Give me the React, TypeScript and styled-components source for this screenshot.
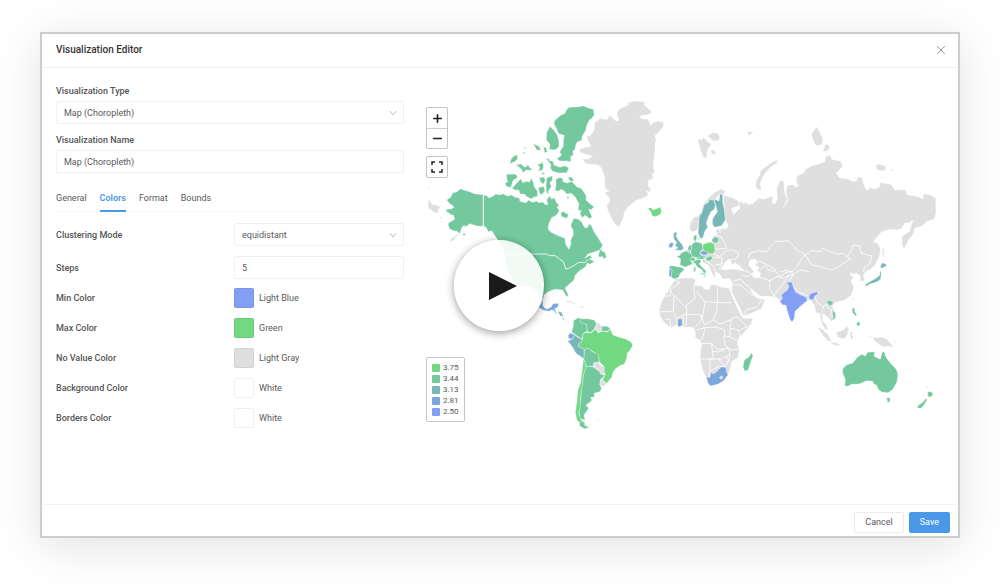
import React from "react";
import styled, { createGlobalStyle } from "styled-components";
import { Minus, Plus, X } from "lucide-react";

const GlobalStyle = createGlobalStyle`
  *, *::before, *::after { box-sizing: border-box; }
  body {
    margin: 0;
    background: #fff;
    color: #595959;
    font-family: Roboto, "Liberation Sans", sans-serif;
    font-size: 9px;
    line-height: 12px;
  }
  button, input, select { font: inherit; color: inherit; }
`;

const Stage = styled.div`
  position: relative;
  min-height: 100vh;
  padding: 32px 40px 48px;
  overflow: hidden;
`;

const Dialog = styled.section`
  display: flex;
  flex-direction: column;
  min-height: calc(100vh - 80px);
  border: 2px solid #cdcdcd;
  background: #fff;
  box-shadow: 0 8px 44px rgba(0, 0, 0, 0.12);
`;

const Header = styled.header`
  display: flex;
  align-items: center;
  justify-content: space-between;
  height: 34px;
  padding: 0 12px 2px 14px;
  border-bottom: 1px solid #f2f2f2;
`;

const Title = styled.h1`
  margin: 0;
  color: #333;
  font-size: 10px;
  font-weight: 500;
  line-height: 14px;
`;

const CloseButton = styled.button`
  display: flex;
  width: 10px;
  justify-content: center;
  padding: 0;
  border: 0;
  background: none;
  color: #8c8c8c;
  svg { flex: none; }
`;

const Body = styled.div`
  display: grid;
  grid-template-columns: minmax(0, 58fr) minmax(0, 85fr);
  gap: 22px;
  flex: 1;
  align-items: start;
  padding: 17px 22px 16px 14px;
`;

const Settings = styled.form`
  display: flex;
  flex-direction: column;
`;

const Field = styled.div`
  display: flex;
  flex-direction: column;
  gap: 4px;
  margin-bottom: 10px;
`;

const Label = styled.label`
  color: #555;
  font-weight: 500;
`;

const inputLook = `
  width: 100%;
  height: 23px;
  padding: 0 7px;
  border: 1px solid #f0f0f0;
  border-radius: 2px;
  background: #fff;
`;

const TextInput = styled.input`${inputLook}`;

const SelectBox = styled.div`
  position: relative;
  svg {
    position: absolute;
    top: 9px;
    right: 7px;
    pointer-events: none;
  }
`;

const Select = styled.select`
  ${inputLook}
  appearance: none;
`;

const Tabs = styled.div`
  display: flex;
  gap: 13px;
  margin: 8px 0 11px;
  border-bottom: 1px solid #f7f7f7;
`;

const Tab = styled.button<{ $active?: boolean }>`
  height: 21px;
  margin-bottom: -1px;
  padding: 0 0 6px;
  border: 0;
  border-bottom: 2px solid ${(p) => (p.$active ? "#4a98e8" : "transparent")};
  background: none;
  color: ${(p) => (p.$active ? "#4a98e8" : "#595959")};
  font-weight: ${(p) => (p.$active ? 600 : 400)};
`;

const Rows = styled.div`
  display: flex;
  flex-direction: column;
  gap: 10px;
  & + & { margin-top: 9px; }
`;

const Row = styled.div`
  display: grid;
  grid-template-columns: 178px minmax(0, 1fr);
  align-items: center;
`;

const ColorPick = styled.div`
  display: flex;
  align-items: center;
  gap: 5px;
`;

const Swatch = styled.button<{ $color: string }>`
  width: 20px;
  height: 20px;
  padding: 0;
  border: 1px solid rgba(0, 0, 0, 0.06);
  border-radius: 2px;
  background: ${(p) => p.$color};
`;

const MapPane = styled.div`
  position: relative;
  margin-top: 11px;
`;

const MapDrawing = styled.svg`
  display: block;
  width: 100%;
  height: auto;
`;

const Controls = styled.div`
  position: absolute;
  top: 11px;
  left: 0;
  display: flex;
  flex-direction: column;
  gap: 7px;
`;

const ControlBar = styled.div`
  display: flex;
  flex-direction: column;
  width: 22px;
  border: 1px solid #c4c4c4;
  border-radius: 2px;
  background: #fff;
`;

const ControlButton = styled.button`
  display: flex;
  align-items: center;
  justify-content: center;
  height: 20px;
  padding: 0;
  border: 0;
  background: none;
  color: #222;
  & + & { border-top: 1px solid #d0d0d0; }
`;

const Legend = styled.ul`
  position: absolute;
  bottom: 14px;
  left: 0;
  margin: 0;
  padding: 4px 5px;
  border: 1px solid #c4c4c4;
  border-radius: 2px;
  background: #fff;
  list-style: none;
`;

const LegendItem = styled.li<{ $color: string }>`
  display: flex;
  align-items: center;
  gap: 3px;
  height: 11px;
  font-size: 8px;
  &::before {
    content: "";
    width: 8px;
    height: 8px;
    border-radius: 1px;
    background: ${(p) => p.$color};
  }
`;

const Footer = styled.footer`
  display: flex;
  align-items: center;
  justify-content: flex-end;
  gap: 5px;
  height: 32px;
  padding: 3px 8px 0;
  border-top: 1px solid #f2f2f2;
`;

const ActionButton = styled.button<{ $primary?: boolean }>`
  height: 21px;
  padding: 0 10px;
  border: 1px solid ${(p) => (p.$primary ? "#4a98e8" : "#ebebeb")};
  border-radius: 2px;
  background: ${(p) => (p.$primary ? "#4a98e8" : "#fff")};
  color: ${(p) => (p.$primary ? "#fff" : "#595959")};
`;

const PlayButton = styled.button`
  position: absolute;
  top: calc(50% - 53px);
  left: calc(50% - 46px);
  display: flex;
  align-items: center;
  justify-content: center;
  width: 90px;
  height: 91px;
  padding: 0;
  border: 0;
  border-radius: 50%;
  background: rgba(255, 255, 255, 0.9);
  box-shadow: 0 2px 8px rgba(0, 0, 0, 0.4);
`;

const LOW = "#829ff5";
const MIDLOW = "#7ba7dc";
const MID = "#78b6b8";
const HIGH = "#73c99d";
const TOP = "#73d882";
const NONE = "#dfdfdf";

type Shape = [fill: string, d: string];
type Region = { x: number; y: number; shapes: Shape[]; borders?: string };

// Each region is drawn at three units per map unit from its own corner.
const regions: Region[] = [
  {
    x: 420,
    y: 90,
    shapes: [
      [HIGH, "M190 314L200 317 207 324 222 317 227 312 240 315 248 311 262 318 275 315 285 322 298 324 300 334 318 338 326 330 336 337 350 333 356 338 368 336 374 343 384 344 380 330 388 318 396 328 402 322 410 338 417 346 411 352 418 362 410 375 395 383 387 400 384 416 392 426 415 437 435 445 437 463 447 478 453 462 452 450 460 435 459 419 452 408 456 396 462 385 475 388 485 395 493 412 501 414 508 401 516 410 522 425 532 440 540 452 548 465 540 480 520 487 504 492 494 505 510 496 516 502 508 508 524 514 512 522 501 520 497 530 475 545 465 557 462 570 445 585 435 595 443 610 445 620 438 618 428 600 405 598 385 605 372 615 370 628 355 610 335 592 295 588 270 560 258 530 255 492 245 470 230 445 215 422 205 425 198 412 190 408Z"],
      [HIGH, "M122 296L130 300 150 305 162 311 190 314 190 408 175 409 158 404 148 401 142 407 133 412 134 405 126 412 120 428 95 453 91 452 117 430 112 424 100 422 88 416 84 402 91 395 104 388 100 375 92 374 88 369 80 366 79 358 94 357 102 352 98 347 88 340 80 330 92 322 99 308 110 306Z"],
      [HIGH, "M535 497L538 486 544 475 546 484 554 486 560 501 550 507 548 499 539 502Z"],
      [HIGH, "M480 50L488 47 505 54 520 58 523 75 515 85 508 90 501 105 496 124 487 137 485 151 472 156 468 162 465 178 459 183 460 195 452 200 453 215 440 213 420 213 411 206 425 195 419 186 430 168 430 150 433 136 416 131 410 116 402 102 403 93 420 77 435 70 439 60 447 52Z"],
      [HIGH, "M390 109L399 118 405 125 412 136 417 154 417 170 405 180 388 178 390 162 379 150 380 128 385 118Z"],
      [HIGH, "M378 205L388 207 389 213 398 213 402 225 420 232 430 228 440 229 446 236 440 248 416 249 398 244 391 234 393 224Z"],
      [HIGH, "M269 221L274 206 283 197 293 195 292 208 284 215ZM340 161L357 169 363 181 350 180ZM370 172L378 172 382 186 374 188ZM307 187L316 187 315 192ZM313 171L318 171 317 176 313 175ZM288 224L305 222 311 231 318 231 324 224 330 234 337 237 332 241 318 240 308 249 306 239ZM352 224L364 220 366 213 371 228 368 240 355 244 360 232Z"],
      [HIGH, "M260 253L282 252 291 256 292 264 280 270 272 293 258 288 255 280 263 276 260 263Z"],
      [HIGH, "M283 287L295 274 303 266 308 278 320 274 329 276 334 264 340 277 343 291 353 304 352 320 341 321 335 327 323 322 314 313 300 312 297 301 285 300 276 295Z"],
      [HIGH, "M358 263L372 261 376 271 370 283 361 275ZM355 293L371 289 375 303 365 314 358 309ZM380 264L397 257 397 272 390 277 394 290 385 304 386 315 379 306 378 287ZM359 248L374 248 372 254Z"],
      [HIGH, "M408 268L420 262 428 266 430 276 443 279 455 274 470 290 485 296 499 318 498 330 508 340 522 350 514 359 506 358 516 380 510 387 495 376 487 383 480 371 484 362 474 360 477 342 467 323 455 310 440 312 433 303 424 298 414 304 405 301 408 285ZM443 262L456 262 462 272 451 274ZM422 370L430 364 437 370 445 372 442 385 425 380ZM440 318L447 322 444 329Z"],
      [NONE, "M24 328L40 345 47 344 62 351 54 358 55 368 44 369 34 359 25 355ZM24 292L31 296 25 299Z"],
      [HIGH, "M61 381L67 384 62 385ZM127 431L138 430 132 438Z"],
      [MIDLOW, "M370 628L368 645 376 656 385 656 394 650 399 641 416 640 414 652 405 655 402 662 395 659 388 664 370 661 356 652 362 642Z"],
      [MID, "M400 662L406 656 407 667 416 672 409 671ZM413 664L425 667 430 680 421 678ZM425 680L433 688 430 691Z"],
      [NONE, "M437 693L448 697 446 699 437 696ZM438 634L452 633 469 643 462 643 452 637 438 637ZM478 649L492 649 490 653 480 653Z"],
    ],
    borders: "M190 314V408M255 492H380L388 497H405L430 515 438 538 460 528 475 518 495 517 505 508M290 588L330 590 355 612",
  },
  {
    x: 440,
    y: 230,
    shapes: [
      [HIGH, "M400 272L415 263 420 264 422 276 440 283 442 304 430 310 426 327 411 318 395 306 400 288Z"],
      [HIGH, "M418 264L428 267 442 266 462 270 470 281 463 297 451 308 442 304 440 283 422 278Z"],
      [NONE, "M469 277L479 281 486 292 484 305 472 306 467 295Z"],
      [HIGH, "M485 289L501 289 511 295 502 304 485 303Z"],
      [TOP, "M430 310L441 308 454 309 466 297 474 308 488 304 503 306 510 297 519 315 538 322 556 326 574 337 578 347 570 361 562 369 560 385 553 402 538 408 525 418 518 430 516 441 499 461 487 449 496 434 491 426 491 408 478 395 475 378 457 364 442 355 433 360 416 350 417 340 426 333Z"],
      [MIDLOW, "M391 309L404 314 396 328 385 325 385 316Z"],
      [MID, "M404 314L413 322 425 327 426 333 416 341 416 350 432 358 433 387 408 370 396 349 383 333 396 328Z"],
      [HIGH, "M433 360L444 354 457 365 475 373 478 396 462 398 459 409 438 409 432 389Z"],
      [NONE, "M462 400L475 396 480 405 493 411 493 430 484 434 479 423 464 413Z"],
      [HIGH, "M438 409L459 410 464 414 478 424 484 434 496 434 482 449 480 465 485 475 480 485 462 490 464 501 452 502 456 511 448 518 438 525 446 535 438 546 432 555 435 570 420 566 417 545 421 514 426 467 431 429Z"],
      [NONE, "M482 447L499 459 493 470 479 465Z"],
      [TOP, "M430 388L437 401 438 414 431 432 427 467 421 503 420 535 416 550 424 571 434 577 420 581 410 568 406 546 411 513 414 481 422 457 427 419Z"],
      [HIGH, "M418 577L434 575 434 586 448 591 434 597 419 588Z"],
      [NONE, "M468 569L479 568 473 572Z"],
    ],
  },
  {
    x: 560,
    y: 90,
    shapes: [
      [NONE, "M203 38L225 33 253 36 255 48 275 64 271 71 238 79 245 86 264 88 272 106 282 97 298 93 312 98 309 110 297 125 284 138 289 147 285 160 285 185 282 205 280 230 284 245 276 253 280 263 265 272 264 288 272 298 270 306 260 303 265 316 244 327 228 331 213 344 203 352 194 366 188 388 178 410 166 404 155 385 143 360 140 343 148 338 149 323 138 315 136 305 147 306 135 292 134 260 124 234 115 225 78 221 67 208 87 207 97 199 60 187 58 178 75 172 91 170 92 164 82 151 81 139 91 137 103 120 104 98 121 85 140 89 149 76 169 94 177 91 170 72 177 58 205 45Z"],
      [TOP, "M264 355L275 353 277 360 288 357 300 351 305 363 300 374 286 380 276 377 274 368Z"],
      [NONE, "M413 147L424 149 430 142 438 148 444 156 454 163 443 178 439 205 429 200 421 178ZM442 138L457 128 472 129 480 140 476 151 462 154ZM453 184L459 179 467 186 464 194 456 192Z"],
    ],
  },
  {
    x: 660,
    y: 120,
    shapes: [
      [NONE, "M190 226L215 232 238 245 236 258 222 262 214 266 221 283 240 264 236 250 245 244 252 253 256 245 266 254 280 249 296 235 315 238 332 229 341 233 335 244 343 253 352 239 350 205 360 183 371 182 373 214 382 239 370 262 384 242 378 216 382 197 398 194 408 202 415 198 409 184 411 168 430 160 436 148 456 137 477 132 495 124 497 110 509 104 516 118 541 124 548 138 529 160 540 174 567 177 573 184 590 184 591 173 606 172 610 190 620 212 631 203 643 207 658 201 661 187 695 194 703 210 735 209 742 224 776 230 788 238 792 221 811 225 827 235 828 280 822 298 801 304 787 318 765 324 759 344 746 359 732 387 726 375 726 349 748 335 759 300 748 308 734 309 726 325 711 330 690 328 665 335 640 365 655 372 662 390 658 410 645 435 632 448 620 452 610 466 614 482 602 484 600 467 589 459 579 463 570 457 575 470 582 468 573 485 582 500 575 525 555 540 526 547 517 556 527 590 525 598 513 602 502 590 487 580 488 603 500 615 503 632 492 625 482 600 480 580 468 578 463 555 450 538 435 548 405 575 402 597 395 607 388 592 378 555 365 550 360 540 345 530 325 529 300 528 285 515 268 502 280 525 293 535 315 540 305 565 270 582 250 587 235 555 215 515 218 490 210 476 188 476 178 460 165 456 168 475 157 462 145 435 125 425 128 410 122 395 130 373 160 362 157 350 172 342 166 329 200 325 205 318 196 300Z"],
      ["#fff", "M193 430L205 418 214 424 214 434 225 428 241 440 254 454 235 449 215 447 194 450 184 448ZM268 422L285 416 291 423 285 434 299 444 291 449 301 460 299 473 284 474 275 464 281 454 267 436Z"],
      [NONE, "M91 308L103 291 114 289 124 271 133 250 149 230 165 217 184 207 196 214 190 226 179 222 166 238 162 241 148 238 134 259 122 277 118 295 117 322 107 333 96 336 89 326Z"],
      [MID, "M122 357L114 338 116 317 118 289 126 277 132 255 145 247 148 238 162 241 166 256 163 268 152 276 144 294 139 309 143 322 134 334 130 351Z"],
      [MID, "M162 237L177 243 180 222 188 224 188 246 193 269 196 300 185 317 165 322 157 313 158 296 172 275 168 259Z"],
      [MID, "M45 336L52 338 48 347 56 362 67 374 71 385 65 391 44 391 54 383 46 378 50 367 42 358 40 343Z"],
      [MIDLOW, "M28 371L37 366 40 373 36 383 26 382Z"],
      [HIGH, "M48 407L59 407 63 399 79 392 88 399 99 402 96 413 92 421 98 433 84 437 77 442 60 435 62 417Z"],
      [HIGH, "M28 437L42 438 67 443 73 449 60 461 57 471 45 477 34 473 36 449 28 446Z"],
      [MIDLOW, "M28 447L36 448 34 471 27 468Z"],
      [HIGH, "M95 374L106 365 126 370 129 388 119 396 125 408 116 413 98 411 92 397Z"],
      [HIGH, "M87 377L95 374 93 391 82 391ZM101 349L110 343 110 356 105 365 101 360ZM113 354L119 357 116 361ZM91 415L101 412 107 419 99 424 91 421Z"],
      [HIGH, "M97 426L108 420 120 418 123 426 117 431 129 444 138 452 137 462 131 461 127 450 111 440 106 431ZM119 459L132 459 130 465ZM102 441L107 440 106 457 101 453ZM132 456L137 468 134 473Z"],
      [HIGH, "M105 413L116 413 123 406 136 407 133 417 113 418ZM137 414L151 408 159 412 151 422 139 423Z"],
      [TOP, "M129 373L147 367 162 371 165 391 159 402 139 398 129 389Z"],
      [MIDLOW, "M120 396L130 392 145 398 138 405 126 404ZM82 391L91 393 90 399Z"],
      [HIGH, "M156 358L166 350 177 356 174 366 166 370 157 365Z"],
      [NONE, "M294 208L286 200 291 178 300 164 301 153 318 140 336 126 353 120 352 128 332 141 316 158 305 178 300 193 305 209Z"],
      [NONE, "M262 36L281 34 267 47ZM470 20L480 37 489 60 484 75 469 77 460 63 454 41ZM498 68L510 82 503 92 488 95ZM648 135L656 132 677 139 676 150 666 153 650 148ZM685 145L701 151 697 154ZM663 171L672 173 663 176ZM823 206L828 206 828 210ZM668 377L673 390 671 418 668 410Z"],
    ],
    borders:
      "M165 348H182L196 373 200 385 168 388M160 402L178 410 200 391 220 390 237 400 230 416 206 420M158 412L185 412 186 432 166 435M140 424L160 437 166 455M185 434L178 449M128 410L150 432M180 340V325M265 415L270 400 295 392 320 395 330 380 345 365 385 362 395 372 415 395 425 397 435 405 455 392 480 395 488 385 510 395 530 402 550 400 560 410 572 415 550 430 538 440 515 450 480 440 455 435 435 405M560 410L575 390 578 375 598 378 605 400 635 408 630 430 615 440 610 455M300 450L316 436 326 451 348 454 360 470 378 458 400 452 412 438 425 415 435 405M285 433L300 424 318 432 348 450M255 450L275 463 265 470 242 465M220 482L245 478 252 490 270 502M222 495L240 495 265 515 278 527M300 472L330 482 328 505 342 528M330 482L350 470 372 474 388 465 370 490 355 510 342 528M388 465L400 463 390 480 400 500 420 518 445 528 470 518 480 520M360 456L382 450 402 462 420 450 448 455M470 518L465 535 475 550 490 560 505 550 520 550M490 560L485 578M500 560L515 570 512 590M255 585L258 570 290 562 305 540",
  },
  {
    x: 650,
    y: 250,
    shapes: [
      [NONE, "M75 88L100 84 128 84 138 90 135 105 155 108 165 118 178 118 182 105 200 105 215 112 238 115 245 135 258 165 270 190 280 205 308 205 305 220 285 245 265 265 262 280 268 300 265 322 245 335 240 360 232 375 215 395 195 403 178 405 170 385 158 360 150 325 152 300 155 285 148 270 135 262 137 250 132 235 120 230 105 232 80 225 62 232 45 220 30 200 28 180 35 155 48 130 65 105Z"],
      [MIDLOW, "M169 380L180 383 182 367 190 372 200 365 214 350 227 352 230 366 234 375 221 392 205 402 181 408 173 397Z"],
      [NONE, "M208 382L215 377 219 383 213 389Z"],
    ],
    borders:
      "M72 90L90 97 62 118 48 130M35 138H62V118M62 125L105 170 135 145 132 115 138 90M140 125L165 155 202 158V108M202 158H245M202 158L200 185 190 210 210 222 245 208M165 155L160 190 156 205 165 225 190 210M110 168V192L156 195M110 192L108 228M156 195L152 215 135 232M32 185H70L72 140M70 190L80 205 108 192M45 210L60 205 62 230M80 205V225M100 195V230M140 240L168 232 200 232 225 240 222 265 225 285 235 295 200 298 185 280H150M165 235L160 258 150 275M185 280L187 305 190 327H150M187 305H205L225 300M235 292L240 312 215 327H180V365L176 382M180 365L205 350H225M205 327L225 350M240 312L236 330 228 350M225 258L240 260 262 272M225 285L240 300 265 298M240 260V235L265 240 270 260M240 232L245 205 262 200 275 215 292 230 270 240M238 335L228 318",
  },
  {
    x: 650,
    y: 250,
    shapes: [
      [MIDLOW, "M84 207H96L97 226 86 231 83 224Z"],
      [HIGH, "M304 308L309 318 303 333 294 361 284 363 279 351 283 330 297 321Z"],
    ],
  },
  {
    x: 770,
    y: 250,
    shapes: [
      [LOW, "M50 97L66 96 70 112 77 127 92 135 109 142 111 152 95 165 75 184 73 205 66 216 60 208 53 187 48 166 37 164 29 153 37 147 34 134 53 119 57 109Z"],
      [LOW, "M116 138L124 130 142 125 144 131 134 138 130 150 119 148Z"],
      [HIGH, "M170 156L178 151 189 156 188 164 178 167Z"],
      [HIGH, "M187 180L196 189 197 203 182 213 190 203Z"],
      [NONE, "M143 232L157 238 175 255 185 274 176 274 160 258ZM182 277L198 278 214 285 205 287 186 283ZM198 249L208 244 220 240 230 228 237 237 231 255 224 266 205 263ZM240 247L252 245 245 251 250 265 242 268ZM292 256L304 258 302 262ZM308 262L323 264 333 260 350 267 362 280 371 294 356 288 345 291 335 288 325 281 314 273ZM370 273L380 274 372 278ZM75 216L81 220 79 226Z"],
      [NONE, "M246 145L252 145 249 153Z"],
      [HIGH, "M246 176L252 173 255 185 261 196 257 198 247 187ZM260 220L269 213 270 226 264 228 259 223Z"],
      [MID, "M336 39L343 40 351 46 338 54 330 52ZM331 62L334 67 332 87 324 94 311 99 299 102 289 109 285 104 299 95 318 85 328 77Z"],
      [HIGH, "M218 357L229 345 248 339 262 322 275 313 286 318 293 307 314 305 312 319 331 328 336 308 341 304 350 325 363 341 379 358 384 373 381 395 369 418 354 428 335 426 324 417 320 405 312 403 308 394 290 392 267 402 245 403 233 409 224 407 226 388 218 369Z"],
      [HIGH, "M350 443L361 444 359 456 353 457ZM473 427L480 424 490 431 484 440 474 440ZM469 445L471 449 463 464 453 475 442 474 443 468 458 457ZM468 409L474 413 472 415Z"],
    ],
  },
];

const WorldMap = () => (
  <MapDrawing viewBox="426 96 510 340" role="img" aria-label="World map">
    {regions.map((r, i) => (
      <g key={i} transform={`translate(${r.x} ${r.y}) scale(0.33333)`} strokeLinejoin="round">
        {r.shapes.map(([fill, d], j) => (
          <path key={j} d={d} fill={fill} stroke="#fff" strokeWidth={1} />
        ))}
        {r.borders && <path d={r.borders} fill="none" stroke="#fff" strokeWidth={2.5} />}
      </g>
    ))}
  </MapDrawing>
);

const SelectArrow = () => (
  <svg width="8" height="6" viewBox="0 0 8 6" fill="none" stroke="#bfbfbf" aria-hidden="true">
    <path d="M1 1L4 5 7 1" />
  </svg>
);

const colors = [
  { id: "min", label: "Min Color", name: "Light Blue", value: LOW },
  { id: "max", label: "Max Color", name: "Green", value: TOP },
  { id: "none", label: "No Value Color", name: "Light Gray", value: NONE },
  { id: "background", label: "Background Color", name: "White", value: "#fff" },
  { id: "borders", label: "Borders Color", name: "White", value: "#fff" },
];

const legend = [
  { value: "3.75", color: TOP },
  { value: "3.44", color: HIGH },
  { value: "3.13", color: MID },
  { value: "2.81", color: MIDLOW },
  { value: "2.50", color: LOW },
];

const tabs = ["General", "Colors", "Format", "Bounds"];

export default function App() {
  return (
    <>
      <GlobalStyle />
      <Stage>
        <Dialog>
          <Header>
            <Title>Visualization Editor</Title>
            <CloseButton aria-label="Close">
              <X size={14} strokeWidth={1.6} />
            </CloseButton>
          </Header>
          <Body>
            <Settings>
              <Field>
                <Label htmlFor="type">Visualization Type</Label>
                <SelectBox>
                  <Select id="type">
                    <option>Map (Choropleth)</option>
                  </Select>
                  <SelectArrow />
                </SelectBox>
              </Field>
              <Field>
                <Label htmlFor="name">Visualization Name</Label>
                <TextInput id="name" defaultValue="Map (Choropleth)" />
              </Field>
              <Tabs role="tablist">
                {tabs.map((t) => (
                  <Tab key={t} type="button" role="tab" aria-selected={t === "Colors"} $active={t === "Colors"}>
                    {t}
                  </Tab>
                ))}
              </Tabs>
              <Rows>
                <Row>
                  <Label htmlFor="mode">Clustering Mode</Label>
                  <SelectBox>
                    <Select id="mode">
                      <option>equidistant</option>
                    </Select>
                    <SelectArrow />
                  </SelectBox>
                </Row>
                <Row>
                  <Label htmlFor="steps">Steps</Label>
                  <TextInput id="steps" defaultValue="5" />
                </Row>
              </Rows>
              <Rows>
                {colors.map((c) => (
                  <Row key={c.id}>
                    <Label htmlFor={c.id}>{c.label}</Label>
                    <ColorPick>
                      <Swatch id={c.id} type="button" $color={c.value} />
                      <span>{c.name}</span>
                    </ColorPick>
                  </Row>
                ))}
              </Rows>
            </Settings>
            <MapPane>
              <WorldMap />
              <Controls>
                <ControlBar>
                  <ControlButton aria-label="Zoom in">
                    <Plus size={13} strokeWidth={3} />
                  </ControlButton>
                  <ControlButton aria-label="Zoom out">
                    <Minus size={13} strokeWidth={3} />
                  </ControlButton>
                </ControlBar>
                <ControlBar>
                  <ControlButton aria-label="Full screen">
                    <svg width="12" height="12" viewBox="0 0 12 12" fill="none" stroke="currentColor" strokeWidth="1.5">
                      <path d="M1 4V1H4M8 1H11V4M11 8V11H8M4 11H1V8" />
                    </svg>
                  </ControlButton>
                </ControlBar>
              </Controls>
              <Legend>
                {legend.map((l) => (
                  <LegendItem key={l.value} $color={l.color}>
                    {l.value}
                  </LegendItem>
                ))}
              </Legend>
            </MapPane>
          </Body>
          <Footer>
            <ActionButton>Cancel</ActionButton>
            <ActionButton $primary>Save</ActionButton>
          </Footer>
        </Dialog>
        <PlayButton aria-label="Play">
          <svg width="90" height="91" viewBox="0 0 90 91">
            <path d="M35 32L63 46 35 60Z" fill="#1a1a1a" />
          </svg>
        </PlayButton>
      </Stage>
    </>
  );
}
